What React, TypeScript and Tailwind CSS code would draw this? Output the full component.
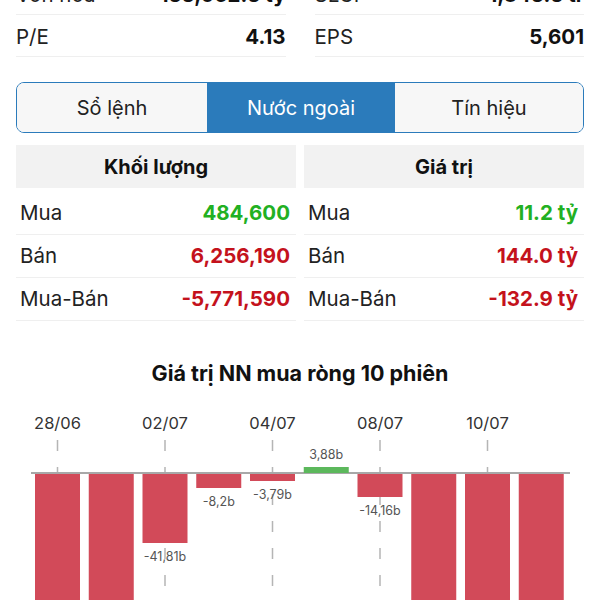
import React from 'react';

const FONT = { fontFamily: 'Inter, "Noto Sans", "Liberation Sans", sans-serif' };

const TOP_ROWS = [
  [
    { label: 'Vốn hóa', value: '155,062.5 tỷ' },
    { label: 'SLCP', value: '1,345.5 tr' },
  ],
  [
    { label: 'P/E', value: '4.13' },
    { label: 'EPS', value: '5,601' },
  ],
];

const VOLUME = [
  { label: 'Mua', value: '484,600', color: 'text-[#22b022]' },
  { label: 'Bán', value: '6,256,190', color: 'text-[#c4121c]' },
  { label: 'Mua-Bán', value: '-5,771,590', color: 'text-[#c4121c]' },
];

const VALUE = [
  { label: 'Mua', value: '11.2 tỷ', color: 'text-[#22b022]' },
  { label: 'Bán', value: '144.0 tỷ', color: 'text-[#c4121c]' },
  { label: 'Mua-Bán', value: '-132.9 tỷ', color: 'text-[#c4121c]' },
];

// bottom of each bar in page px (axis at 474); null = runs off the page
const BARS: { bottom: number | null; label?: string; up?: boolean }[] = [
  { bottom: null },
  { bottom: null },
  { bottom: 543, label: '-41,81b' },
  { bottom: 488, label: '-8,2b' },
  { bottom: 481, label: '-3,79b' },
  { bottom: 467, label: '3,88b', up: true },
  { bottom: 497, label: '-14,16b' },
  { bottom: null },
  { bottom: null },
  { bottom: null },
];

const DATES = ['28/06', '02/07', '04/07', '08/07', '10/07'];

function Chart() {
  const top = 395;
  const axis = 474 - top;
  const step = 53.75;
  const x0 = 35;
  const w = 45;
  return (
    <svg width="600" height="205" viewBox="0 0 600 205" className="block">
      {DATES.map((d, i) => {
        const cx = x0 + w / 2 + i * 2 * step;
        return (
          <g key={d}>
            <text x={cx} y={34} textAnchor="middle" fontSize="16.5" fill="#333" style={FONT}>
              {d}
            </text>
            <line x1={cx} y1={45} x2={cx} y2={205} stroke="#b5b5b5" strokeWidth="1.5" strokeDasharray="11 16" />
          </g>
        );
      })}
      <line x1={31} y1={axis - 1} x2={570} y2={axis - 1} stroke="#a8a8a8" strokeWidth="2" />
      {BARS.map((b, i) => {
        const x = x0 + i * step;
        const cx = x + w / 2;
        if (b.up) {
          const y = (b.bottom as number) - top;
          return (
            <g key={i}>
              <rect x={x} y={y} width={w} height={axis - 1 - y} fill="#5cb85c" />
              <text x={cx} y={y - 8} textAnchor="middle" fontSize="12.5" fill="#555" style={FONT}>
                {b.label}
              </text>
            </g>
          );
        }
        const bottom = b.bottom === null ? 205 : b.bottom - top;
        return (
          <g key={i}>
            <rect x={x} y={axis} width={w} height={bottom - axis} fill="#d24a59" />
            {b.label && (
              <text x={cx} y={bottom + 18} textAnchor="middle" fontSize="12.5" fill="#555" style={FONT}>
                {b.label}
              </text>
            )}
          </g>
        );
      })}
    </svg>
  );
}

function StatTable({ title, rows }: { title: string; rows: typeof VOLUME }) {
  return (
    <div>
      <div className="h-[43px] bg-[#f2f2f2] flex items-center justify-center text-[20px] font-bold text-[#111]">
        {title}
      </div>
      <div className="mt-1">
        {rows.map(r => (
          <div key={r.label} className="h-[43px] border-b border-[#efefef] flex items-center justify-between pl-1 pr-1.5">
            <span className="text-[20.5px] text-[#222]">{r.label}</span>
            <span className={`text-[20.5px] font-bold ${r.color}`}>{r.value}</span>
          </div>
        ))}
      </div>
    </div>
  );
}

export default function App() {
  return (
    <div className="w-[600px] h-[600px] overflow-hidden bg-white" style={FONT}>
      <div className="px-4 -mt-[27px]">
        {TOP_ROWS.map((row, i) => (
          <div key={i} className="grid grid-cols-2 gap-[29px]">
            {row.map(c => (
              <div key={c.label} className="h-[42px] pt-1 border-b border-[#efefef] flex items-center justify-between">
                <span className="text-[20.5px] text-[#222]">{c.label}</span>
                <span className="text-[20.5px] font-bold text-[#111]">{c.value}</span>
              </div>
            ))}
          </div>
        ))}

        <div className="mt-[25px] h-[51px] flex border border-[#2b7bbb] rounded-lg overflow-hidden">
          <button className="w-[190px] bg-[#f7f7f7] text-[20px] text-[#222]">Sổ lệnh</button>
          <button className="w-[188px] bg-[#2b7bbb] text-[20px] text-white">Nước ngoài</button>
          <button className="flex-1 bg-[#f7f7f7] text-[20px] text-[#222]">Tín hiệu</button>
        </div>

        <div className="mt-[12px] grid grid-cols-2 gap-2">
          <StatTable title="Khối lượng" rows={VOLUME} />
          <StatTable title="Giá trị" rows={VALUE} />
        </div>
      </div>

      <div className="mt-[36px] text-center text-[21.5px] font-bold text-[#111]">Giá trị NN mua ròng 10 phiên</div>
      <div className="mt-[6px]">
        <Chart />
      </div>
    </div>
  );
}
